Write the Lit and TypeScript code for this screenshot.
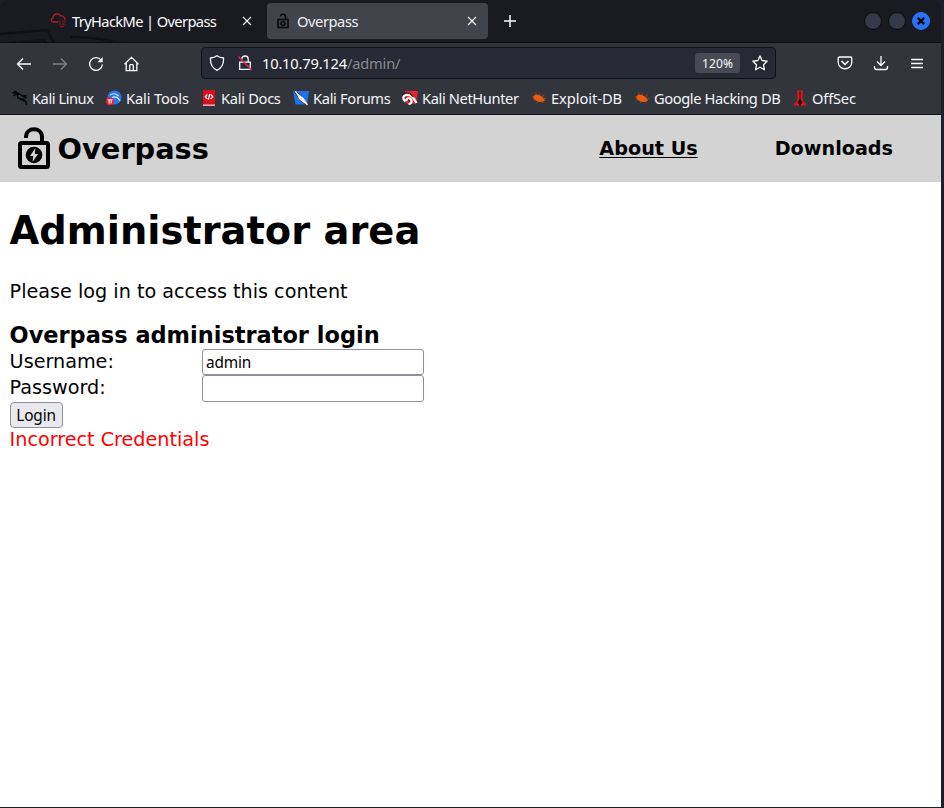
import { LitElement, html, css, svg } from "lit";
import { customElement } from "lit/decorators.js";

const dragon = svg`<path d="M.3 3 4 2.500l3 .8M1.500 5.800 4.500 4l3 .2 2.500 1.300 2.500 1.800 2 .4M5.500 4.500c-.8 3 1 4 3.500 4.300 3 .2 5 1.700 5.500 6M7.500 9l5 2M10 6l4.500-.2M2 1.500l3 1" fill="none" stroke="#050505" stroke-width="1.400"/>`;

const bug = svg`<path d="M2 6.500 4.500 4.500l4 .5 3.500 2.500 2 3-2.500 1.500-4.500-.3L3 9.500z" fill="#ee5c10"/><path d="M.8 7h3M4.500 2.500l1.500 2.500M8.500 3.500v2.500M13 4.500l-2 3M15.500 8.300l-3 .5M2.500 10.500l2-1.500M6 13l1-2M12 13l-.5-2" stroke="#a94a1c" stroke-width=".9" fill="none"/>`;

const favicons = {
  linux: dragon,
  tools: svg`<circle cx="8.500" cy="7.500" r="7" fill="#2777f4"/><path d="M4 5.200c3-2.500 6-1.500 8.500.8M6 7.500c3.500-1.500 6.500 0 8 3.500" fill="none" stroke="#dce9ff" stroke-width="1.100"/><circle cx="4" cy="11.300" r="4" fill="#e32633"/><path d="M1.700 9.900h4.800M3.100 9.900v3.600M5.100 9.900v3.600" stroke="#fff" stroke-width="1" fill="none"/>`,
  docs: svg`<path d="M2 0h12v16H2z" fill="#d9101b"/><path d="M2 14.500h12v1.300H2z" fill="#e6c9cb"/><path d="m6.300 4.500-2 2.300 2 2.300M9.700 4.500l2 2.300-2 2.300M8.700 4l-1.300 5.500" fill="none" stroke="#fff" stroke-width="1.200"/>`,
  forums: svg`<path d="M0 1h16l-2 13.500H2.500z" fill="#1b73ef"/><path d="M1 .5 4 2l5 4.500 3 3.500 3 4.500-1 1-5-3.500-4-3L4 5z" fill="#f5f5f5"/><path d="m.5.500 3.500 5 1.500 3.500 4 3.500 4 2.500M4 2l5 4.500" stroke="#202020" stroke-width=".8" fill="none"/>`,
  nethunter: svg`<path d="M3 1h13l-2 12.500H4z" fill="#ee222d"/><path d="M3.500 11.500c-4-3-2-7 2.500-6.500 4 0 5.500 3 8.500 8M4 11c1-4 5-3 5.500 0 .2 2-1 3-3 3" fill="none" stroke="#fff" stroke-width="2.200"/><path d="M0 5c2-2 5-3 8-1.500l3.500 3.500M6 9.500l2 2" fill="none" stroke="#1c1c1c" stroke-width="1.100"/>`,
  exploit: bug,
  offsec: svg`<path d="M5 .5h6L10.500 9l4 6.500h-13l4-6.500z" fill="#d3191e"/><path d="M8 1.500v10" stroke="#551012" stroke-width="1.200"/><path d="m8 9 2.500 3L8 16l-2.500-4z" fill="#190b0c"/>`,
};

const bookmarks: { name: string; icon: keyof typeof favicons; cls: string }[] = [
  { name: "Kali Linux", icon: "linux", cls: "b1" },
  { name: "Kali Tools", icon: "tools", cls: "b2" },
  { name: "Kali Docs", icon: "docs", cls: "b3" },
  { name: "Kali Forums", icon: "forums", cls: "b4" },
  { name: "Kali NetHunter", icon: "nethunter", cls: "b5" },
  { name: "Exploit-DB", icon: "exploit", cls: "b6" },
  { name: "Google Hacking DB", icon: "exploit", cls: "b7" },
  { name: "OffSec", icon: "offsec", cls: "b8" },
];

@customElement("browser-chrome")
class BrowserChrome extends LitElement {
  static styles = css`
    :host { display: block; height: 115px; color: #fbfbfe; font: 14.67px/20px "Noto Sans", sans-serif; white-space: nowrap; }
    * { box-sizing: border-box; }
    svg { display: block; flex: none; fill: none; stroke: currentColor; stroke-width: 1.3; }
    .tabs { height: 43px; display: flex; align-items: center; background: #1a1b20; border-bottom: 1px solid #0c0d11; position: relative; overflow: hidden; border-radius: 8px 8px 0 0; }
    .art { position: absolute; left: 0; top: 0; stroke: #101115; stroke-width: 2.5; }
    .tab { height: 36px; display: flex; align-items: center; position: relative; }
    .idle { width: 223px; margin-left: 44px; padding: 0 0 0 6px; }
    .active { width: 221px; background: #42444c; border-radius: 4px; padding-left: 9px; }
    .idle .label { margin-left: 6px; width: 167px; letter-spacing: -.62px; }
    .active .label { margin-left: 7px; width: 166px; letter-spacing: -.42px; color: #f0f0f3; }
    .plus { margin-left: 15px; }
    .window { display: flex; gap: 6px; margin-left: auto; padding-right: 11px; }
    .dot { width: 18px; height: 18px; border-radius: 50%; background: #343947; border: 1px solid #090b0f; }
    .close { background: #2872f5; border-color: #2872f5; }
    .close svg { stroke: #080c14; stroke-width: 2.4; }
    .nav { height: 41px; background: #33353d; display: flex; align-items: center; padding-left: 16px; }
    .nav > svg { margin-right: 20px; }
    .dim { color: #7e8086; }
    .url { flex: none; height: 32px; width: 575px; margin: 0 0 2px 41px; border: 1px solid #101116; border-radius: 4px; background: #272934; display: flex; align-items: center; padding-left: 7px; }
    .url .lock { margin-left: 12px; }
    .address { margin-left: 9px; width: 433px; letter-spacing: -.19px; }
    .path { color: #888991; }
    .zoom { width: 45px; height: 20px; border-radius: 3px; background: #474953; font-size: 12px; text-align: center; line-height: 21px; margin-right: 12px; letter-spacing: .1px; }
    .nav .pocket { margin-left: 61px; }
    .up { margin-bottom: 2px; }
    .bar { height: 31px; background: #33353d; border-bottom: 1px solid #101116; display: flex; align-items: center; padding: 0 0 2px 12px; }
    .bm { display: flex; align-items: center; gap: 4px; color: #f5f5f8; }
    .bm svg { stroke: none; }
    .b1 { width: 94px; letter-spacing: -.45px; } .b2 { width: 95px; letter-spacing: -.15px; }
    .b3 { width: 92px; letter-spacing: -.3px; } .b4 { width: 109px; letter-spacing: -.32px; }
    .b5 { width: 129px; letter-spacing: -.38px; } .b6 { width: 103px; letter-spacing: -.05px; }
    .b7 { width: 158px; letter-spacing: -.4px; } .b8 { letter-spacing: -.18px; }
  `;
  render() {
    const cross = svg`<path d="m4 4 8 8m0-8-8 8" stroke-width="1.1"/>`;
    return html`
      <div class="tabs">
        <svg class="art" width="130" height="43"><path d="M0 34 47 30l8 15M0 44l44-4 4 4M70 37q28-1 60 9"/></svg>
        <div class="tab idle">
          <svg width="16" height="16" viewBox="0 0 16 16"><path d="M8 9H3.500C1 9 .3 5.700 3 5c0-4.500 6.500-5.500 7.500-2 3-.5 4.500 1.500 4.500 4" stroke="#b51a21"/><path d="M8 8.500h3m1 0h4M9 11h2m1 0h3M10 13.500h4" stroke="#76191f"/></svg>
          <span class="label">TryHackMe | Overpass</span>
          <svg width="16" height="16">${cross}</svg>
        </div>
        <div class="tab active">
          <svg width="14" height="16" viewBox="0 0 14 16"><path d="M2 6.500h10v8H2zM4.500 3.500c0-3 5-3 5 0v3" stroke="#0a0a0c" stroke-width="1.600"/><circle cx="7" cy="10.500" r="2" stroke="#0a0a0c" stroke-width="1.600"/></svg>
          <span class="label">Overpass</span>
          <svg width="16" height="16" viewBox="-1 0 16 16">${cross}</svg>
        </div>
        <svg class="plus" width="14" height="14"><path d="M7 1v12M1 7h12" stroke-width="1.500"/></svg>
        <div class="window">
          <span class="dot"></span><span class="dot"></span>
          <span class="dot close"><svg width="16" height="16"><path d="m4.800 4.800 6.400 6.400m0-6.400-6.400 6.400"/></svg></span>
        </div>
      </div>
      <div class="nav">
        <svg width="16" height="16"><path d="M15 8H1.500M7 2.500 1.500 8 7 13.500"/></svg>
        <svg class="dim" width="16" height="16"><path d="M1 8h13.500M9 2.500 14.500 8 9 13.500"/></svg>
        <svg width="16" height="16"><path d="M13.200 4.200A6.400 6.400 0 1 0 14.400 8.500"/><path d="M14.700 1v5.200H9.500z" fill="currentColor" stroke="none"/></svg>
        <svg width="16" height="16" viewBox=".5 0 16 16"><path d="M1 8.200 8 1.300l7 6.900M2.700 7v7.700h10.600V7M6.200 14.500V9.700q0-1 1-1h1.600q1 0 1 1v4.800"/></svg>
        <div class="url">
          <svg width="16" height="16"><path d="M8 .8c2 1.600 4 2 6.500 2.200.3 5-1.500 10-6.500 12.300C3 13 1.200 8 1.500 3 4 2.800 6 2.400 8 .8z"/></svg>
          <svg class="lock" width="16" height="16"><path d="M2.700 7.200h10.600v7.200H2.700zM4.800 4.500V4c0-4 6.400-4 6.400 0v3"/><path d="M1.500 1.500 14.500 15" stroke="#e22850" stroke-width="1.500"/></svg>
          <span class="address">10.10.79.124<span class="path">/admin/</span></span>
          <span class="zoom">120%</span>
          <svg width="16" height="16"><path d="m8 .9 2.100 4.600 5 .7-3.600 3.500.9 5L8 12.300l-4.400 2.400.9-5L.9 6.200l5-.7z" stroke-linejoin="round"/></svg>
        </div>
        <svg class="pocket up" width="16" height="16"><path d="M2.500 2h11q1.300 0 1.300 1.500V7c0 9-13.600 9-13.600 0V3.500Q1.200 2 2.500 2z"/><path d="M4.500 6 8 9.300 11.500 6" stroke-width="1.600"/></svg>
        <svg class="up" width="16" height="16"><path d="M8 1v9.500M4 6.500l4 4 4-4M1.500 11v1.500q0 2 2 2h9q2 0 2-2V11"/></svg>
        <svg class="up" width="16" height="16"><path d="M2 4.500h12M2 8.500h12M2 12.500h12" stroke-width="1.400"/></svg>
      </div>
      <div class="bar">
        ${bookmarks.map((b) => html`<span class="bm ${b.cls}"><svg width="16" height="16">${favicons[b.icon]}</svg><span>${b.name}</span></span>`)}
      </div>`;
  }
}

@customElement("overpass-page")
class OverpassPage extends LitElement {
  static styles = css`
    :host { display: block; background: #fff; color: #000; font: 19.2px/26px "DejaVu Sans", sans-serif; height: 692px; white-space: nowrap; }
    * { box-sizing: border-box; }
    header { height: 67px; background: #d3d3d3; display: flex; align-items: center; padding: 0 48px 0 17px; font-weight: bold; }
    .logo { flex: none; display: block; margin-bottom: 2px; }
    .brand { font-size: 28.8px; line-height: 34px; margin-left: 6.6px; }
    nav { display: flex; gap: 77px; margin-left: auto; padding-top: 1px; }
    .current { text-decoration: underline; text-decoration-thickness: 1px; text-underline-offset: 2px; text-decoration-skip-ink: none; }
    main { padding: 26px 9.6px 0; }
    h1 { margin: 0; font-size: 38.4px; line-height: 46px; }
    p { margin: 25px 0 17px; }
    h3 { margin: 0; font-size: 22.46px; line-height: 27px; }
    .field { display: grid; grid-template-columns: 192.4px 222px; height: 26px; }
    .field.last { height: 27px; }
    .field label { line-height: 25px; }
    input { width: 222px; height: 100%; margin: 0; padding: 0 3px; border: 1px solid #8f8f9d; border-radius: 3px; background: #fff; color: #000; font: 15.4px "Noto Sans", sans-serif; letter-spacing: -.15px; outline: none; }
    button { display: block; width: 53px; height: 26px; padding: 0; border: 1px solid #8f8f9d; border-radius: 4px; background: #e9e9ed; color: #000; font: 15.4px "Noto Sans", sans-serif; letter-spacing: -.15px; }
    .error { color: #f00; line-height: 24px; }
  `;
  render() {
    return html`
      <header>
        <svg class="logo" width="34" height="44" viewBox="0 0 34 44">
          <rect x="3" y="17" width="28" height="24" rx="1.500" fill="none" stroke="#000" stroke-width="4"/>
          <path d="M9 12V11C9 .7 25 .7 25 11v6" fill="none" stroke="#000" stroke-width="4"/>
          <circle cx="17" cy="29" r="8.300"/><path d="m18.500 22-5.500 8h3.200l-.7 6 5.500-8h-3.200z" fill="#d3d3d3"/>
        </svg>
        <span class="brand">Overpass</span>
        <nav><span class="current">About Us</span><span>Downloads</span></nav>
      </header>
      <main>
        <h1>Administrator area</h1>
        <p>Please log in to access this content</p>
        <h3>Overpass administrator login</h3>
        <div class="field"><label for="user">Username:</label><input id="user" value="admin"></div>
        <div class="field last"><label for="pass">Password:</label><input id="pass" type="password"></div>
        <button>Login</button>
        <div class="error">Incorrect Credentials</div>
      </main>`;
  }
}

@customElement("app-root")
class AppRoot extends LitElement {
  static styles = css`
    :host { display: block; box-sizing: border-box; width: 944px; height: 808px; overflow: hidden; background: #1d2029; padding-right: 3px; }
  `;
  render() {
    return html`<browser-chrome></browser-chrome><overpass-page></overpass-page>`;
  }
}
